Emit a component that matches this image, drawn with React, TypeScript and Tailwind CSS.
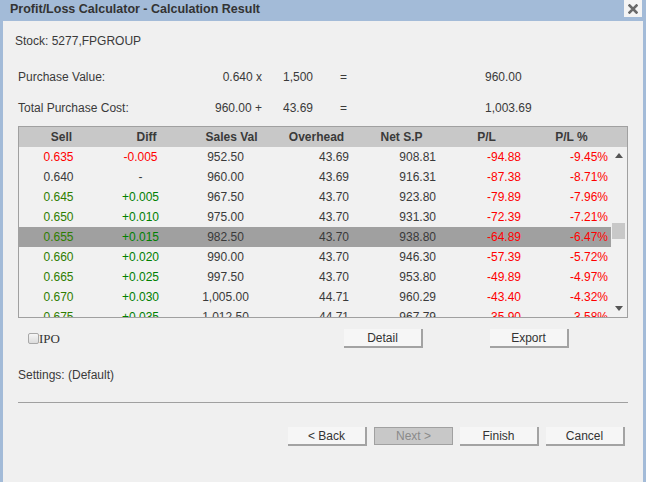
type Row = {
  sell: string
  diff: string
  sales: string
  overhead: string
  net: string
  pl: string
  pct: string
}

const rows: Row[] = [
  { sell: '0.635', diff: '-0.005', sales: '952.50', overhead: '43.69', net: '908.81', pl: '-94.88', pct: '-9.45%' },
  { sell: '0.640', diff: '-', sales: '960.00', overhead: '43.69', net: '916.31', pl: '-87.38', pct: '-8.71%' },
  { sell: '0.645', diff: '+0.005', sales: '967.50', overhead: '43.70', net: '923.80', pl: '-79.89', pct: '-7.96%' },
  { sell: '0.650', diff: '+0.010', sales: '975.00', overhead: '43.70', net: '931.30', pl: '-72.39', pct: '-7.21%' },
  { sell: '0.655', diff: '+0.015', sales: '982.50', overhead: '43.70', net: '938.80', pl: '-64.89', pct: '-6.47%' },
  { sell: '0.660', diff: '+0.020', sales: '990.00', overhead: '43.70', net: '946.30', pl: '-57.39', pct: '-5.72%' },
  { sell: '0.665', diff: '+0.025', sales: '997.50', overhead: '43.70', net: '953.80', pl: '-49.89', pct: '-4.97%' },
  { sell: '0.670', diff: '+0.030', sales: '1,005.00', overhead: '44.71', net: '960.29', pl: '-43.40', pct: '-4.32%' },
  { sell: '0.675', diff: '+0.035', sales: '1,012.50', overhead: '44.71', net: '967.79', pl: '-35.90', pct: '-3.58%' },
]

const headers = ['Sell', 'Diff', 'Sales Val', 'Overhead', 'Net S.P', 'P/L', 'P/L %']

// red for a loss, green for a gain, plain for no change
function tone(v: string) {
  if (v.startsWith('-') && v.length > 1) return 'text-[#ff0000]'
  if (v.startsWith('+')) return 'text-[#008000]'
  return 'text-[#3a3a3a]'
}

function sellTone(i: number) {
  if (i === 0) return 'text-[#ff0000]'
  if (i === 1) return 'text-[#3a3a3a]'
  return 'text-[#2f7d00]'
}

function Button({ label, disabled }: { label: string; disabled?: boolean }) {
  if (disabled) {
    return (
      <div className="w-[79px] h-[18px] flex items-center justify-center bg-[#c8c8c8] border border-[#a0a0a0] text-[#8a8a8a]">
        {label}
      </div>
    )
  }
  return (
    <div className="w-[79px] h-[19px] flex items-center justify-center bg-[#f6f6f6] border-r-2 border-b-2 border-[#a3a3a3] text-[#333]">
      {label}
    </div>
  )
}

export default function App() {
  return (
    <div
      className="w-[646px] h-[482px] bg-[#a3bbd8] flex flex-col text-[12px] text-[#3a3a3a] overflow-hidden"
      style={{ fontFamily: '"Liberation Sans", Arial, sans-serif' }}
    >
      {/* title bar */}
      <div className="h-[21px] flex items-start justify-between pl-[10px] pr-[4px] shrink-0">
        <div className="font-bold text-[12.5px] leading-[18px] text-[#333]">
          Profit/Loss Calculator - Calculation Result
        </div>
        <div className="w-[18px] h-[17px] bg-[#f4f4f4] flex items-center justify-center">
          <svg width="10" height="10" viewBox="0 0 10 10">
            <path d="M1.5 1.5 L8.5 8.5 M8.5 1.5 L1.5 8.5" stroke="#6a6a6a" strokeWidth="2.6" strokeLinecap="square" />
          </svg>
        </div>
      </div>

      <div className="flex-1 mx-[3px] bg-[#f0f0f0] px-[15px] flex flex-col">
        <div className="mt-[12px] leading-[16px] -ml-[3px]">Stock: 5277,FPGROUP</div>

        <div className="mt-[20px] leading-[16px] flex">
          <div className="w-[160px]">Purchase Value:</div>
          <div className="w-[84px] text-right">0.640 x</div>
          <div className="w-[51px] text-right">1,500</div>
          <div className="w-[172px] pl-[27px]">=</div>
          <div>960.00</div>
        </div>
        <div className="mt-[15px] leading-[16px] flex">
          <div className="w-[160px]">Total Purchase Cost:</div>
          <div className="w-[84px] text-right">960.00 +</div>
          <div className="w-[51px] text-right">43.69</div>
          <div className="w-[172px] pl-[27px]">=</div>
          <div>1,003.69</div>
        </div>

        {/* result table */}
        <div className="mt-[10px] h-[192px] border border-[#a0a0a0] flex flex-col">
          <div className="h-[20px] bg-[#c8c8c8] flex items-center font-bold text-[#3a3a3a] shrink-0">
            {headers.map((h) => (
              <div key={h} className="w-[85px] text-center">
                {h}
              </div>
            ))}
          </div>
          <div className="flex flex-1 overflow-hidden bg-[#f1f1f1]">
            <div className="w-[592px] overflow-hidden">
              {rows.map((r, i) => (
                <div
                  key={r.sell}
                  className={`h-[20px] flex items-center ${i === 4 ? 'bg-[#a0a0a0]' : ''}`}
                >
                  <div className={`w-[79px] text-center ${sellTone(i)}`}>{r.sell}</div>
                  <div className={`w-[85px] text-center ${tone(r.diff)}`}>{r.diff}</div>
                  <div className="w-[85px] text-center">{r.sales}</div>
                  <div className="w-[81px] text-right">{r.overhead}</div>
                  <div className="w-[87px] text-right">{r.net}</div>
                  <div className="w-[85px] text-right text-[#ff0000]">{r.pl}</div>
                  <div className="w-[87px] text-right text-[#ff0000]">{r.pct}</div>
                </div>
              ))}
            </div>
            <div className="w-[16px] flex flex-col items-center relative">
              <svg className="mt-[6px]" width="8" height="5" viewBox="0 0 8 5">
                <path d="M0 5 L4 0 L8 5 Z" fill="#555" />
              </svg>
              <div className="absolute left-[1px] top-[76px] w-[13px] h-[16px] bg-[#c8c8c8]" />
              <svg className="mt-auto mb-[6px]" width="8" height="5" viewBox="0 0 8 5">
                <path d="M0 0 L8 0 L4 5 Z" fill="#555" />
              </svg>
            </div>
          </div>
        </div>

        <div className="mt-[11px] h-[19px] flex items-center">
          <div className="w-[326px] flex items-center pl-[10px]">
            <div className="w-[11px] h-[11px] border border-[#a8a8a8] rounded-[2px] bg-gradient-to-b from-[#f6f6f6] to-[#dcdcdc]" />
            <span className="text-[13px] text-[#333]" style={{ fontFamily: '"Liberation Serif", serif' }}>
              IPO
            </span>
          </div>
          <Button label="Detail" />
          <div className="w-[67px]" />
          <Button label="Export" />
        </div>

        <div className="mt-[19px] leading-[16px]">Settings: (Default)</div>
        <div className="mt-[19px] h-px bg-[#a0a0a0]" />

        <div className="mt-[24px] flex justify-end gap-[7px] pr-[3px]">
          <Button label="< Back" />
          <Button label="Next >" disabled />
          <Button label="Finish" />
          <Button label="Cancel" />
        </div>
      </div>
    </div>
  )
}
